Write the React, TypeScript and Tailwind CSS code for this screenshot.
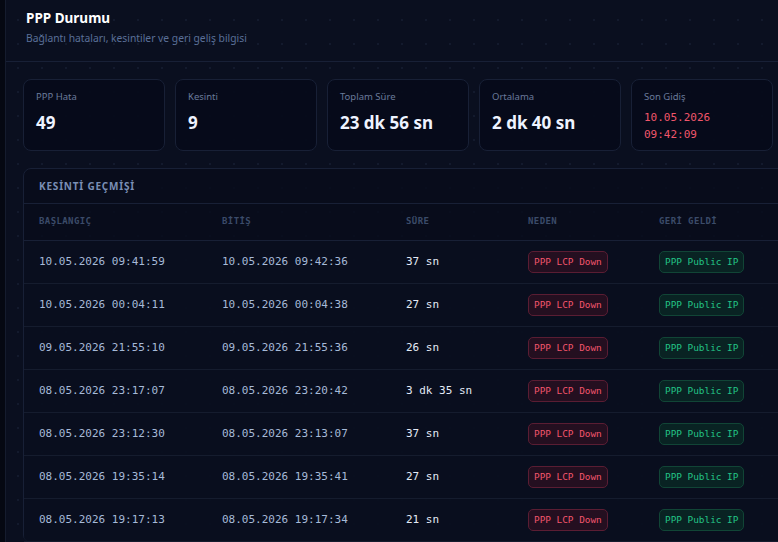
import React from 'react';

type Outage = {
  start: string;
  end: string;
  duration: string;
};

const stats = [
  { label: 'PPP Hata', value: '49' },
  { label: 'Kesinti', value: '9' },
  { label: 'Toplam Süre', value: '23 dk 56 sn' },
  { label: 'Ortalama', value: '2 dk 40 sn' },
];

const outages: Outage[] = [
  { start: '10.05.2026 09:41:59', end: '10.05.2026 09:42:36', duration: '37 sn' },
  { start: '10.05.2026 00:04:11', end: '10.05.2026 00:04:38', duration: '27 sn' },
  { start: '09.05.2026 21:55:10', end: '09.05.2026 21:55:36', duration: '26 sn' },
  { start: '08.05.2026 23:17:07', end: '08.05.2026 23:20:42', duration: '3 dk 35 sn' },
  { start: '08.05.2026 23:12:30', end: '08.05.2026 23:13:07', duration: '37 sn' },
  { start: '08.05.2026 19:35:14', end: '08.05.2026 19:35:41', duration: '27 sn' },
  { start: '08.05.2026 19:17:13', end: '08.05.2026 19:17:34', duration: '21 sn' },
];

const mono = "font-['DejaVu_Sans_Mono',monospace]";
const cols = 'grid grid-cols-[183px_184px_122px_131px_160px]';

function StatCard({ label, children }: { label: string; children: React.ReactNode }) {
  return (
    <div className="w-[142px] h-[72px] shrink-0 rounded-lg border border-[#182036] bg-[#060a19]/90 px-3 pt-[10px]">
      <div className="text-[9.5px] leading-[14px] text-[#6a7a9b]">{label}</div>
      {children}
    </div>
  );
}

function App() {
  return (
    <div className="flex h-[542px] w-[778px] overflow-hidden bg-[#050812] font-['Noto_Sans',sans-serif]">
      <div className="ml-[5px] flex-1 min-w-0 border-l border-[#151c2e] bg-[#0a0f1f] bg-[radial-gradient(circle,#131a2d_1px,transparent_1.2px)] bg-[size:24px_24px] bg-[position:0px_8px]">
        {/* Header */}
        <div className="h-[62px] border-b border-[#182036] pl-5 pt-[8px]">
          <h1 className="text-[13.5px] leading-[20px] font-bold text-white">PPP Durumu</h1>
          <p className="mt-[1px] text-[10.3px] leading-[18px] text-[#5a6f98]">
            Bağlantı hataları, kesintiler ve geri geliş bilgisi
          </p>
        </div>

        <div className="pl-[17px] pt-[17px]">
          {/* Stat cards */}
          <div className="flex gap-[10px]">
            {stats.map((s) => (
              <StatCard key={s.label} label={s.label}>
                <div className="mt-[7px] text-[17px] leading-[24px] font-bold text-[#eef3ff]">{s.value}</div>
              </StatCard>
            ))}
            <StatCard label="Son Gidiş">
              <div className={`mt-[5px] text-[11px] leading-[17px] text-[#f0566b] ${mono}`}>
                10.05.2026
                <br />
                09:42:09
              </div>
            </StatCard>
          </div>

          {/* Outage history */}
          <div className="mt-[17px] w-[800px] rounded-lg border border-[#182036] bg-[#070b1a]/80">
            <div className="h-[35px] border-b border-[#182036] pl-[15px] flex items-center">
              <span className="text-[10px] font-bold tracking-[0.8px] text-[#7a8fb5]">KESİNTİ GEÇMİŞİ</span>
            </div>
            <div className={`${cols} h-[37px] items-center border-b border-[#182036] pl-[15px] ${mono} text-[9px] font-bold tracking-[0.4px] text-[#3b4b69]`}>
              <span>BAŞLANGIÇ</span>
              <span>BİTİŞ</span>
              <span>SÜRE</span>
              <span>NEDEN</span>
              <span>GERİ GELDİ</span>
            </div>
            {outages.map((o) => (
              <div
                key={o.start}
                className={`${cols} h-[43px] items-center border-b border-[#151c2e] bg-[#0a0f20]/70 pl-[15px] ${mono} text-[11px]`}
              >
                <span className="text-[#a6bad8]">{o.start}</span>
                <span className="text-[#a6bad8]">{o.end}</span>
                <span className="text-[#e4ebf7]">{o.duration}</span>
                <span>
                  <span className="inline-flex h-[22px] items-center rounded-[5px] border border-[#5a1d33] bg-[#240f20] px-[5px] text-[9.4px] text-[#f2556c]">
                    PPP LCP Down
                  </span>
                </span>
                <span>
                  <span className="inline-flex h-[22px] items-center rounded-[5px] border border-[#114536] bg-[#092323] px-[5px] text-[9.4px] text-[#23c486]">
                    PPP Public IP
                  </span>
                </span>
              </div>
            ))}
          </div>
        </div>
      </div>
    </div>
  );
}

export default App;
